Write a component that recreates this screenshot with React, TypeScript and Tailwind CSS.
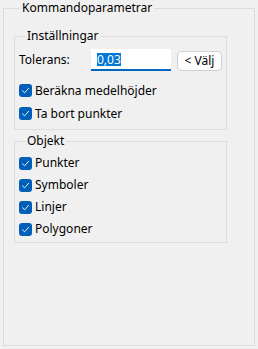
import React from "react";

function Check({ label }: { label: string }) {
  return (
    <div className="flex items-center h-[22px]">
      <span className="w-[13px] h-[13px] rounded-[3px] bg-[#005fb8] flex items-center justify-center shrink-0">
        <svg width="9" height="9" viewBox="0 0 9 9" fill="none">
          <path d="M1.5 4.8 L3.6 6.8 L7.6 2.3" stroke="#ffffff" strokeWidth="0.9" strokeLinecap="round" strokeLinejoin="round" />
        </svg>
      </span>
      <span className="ml-[3px]">{label}</span>
    </div>
  );
}

export default function App() {
  return (
    <div
      className="w-[258px] h-[349px] bg-[#f0f0f0] px-[3px] pb-[3px] text-[12px] leading-[16px] text-black"
      style={{ fontFamily: '"Segoe UI", "Noto Sans", sans-serif' }}
    >
      <fieldset className="h-full border border-[#dcdcdc] pl-[10px] pt-[12px]">
        <legend className="ml-[6px] px-[2px]">Kommandoparametrar</legend>

        <fieldset className="w-[213px] border border-[#dcdcdc] pl-[4px] pt-[5px] pb-[4px]">
          <legend className="ml-[6px] px-[2px]">Inställningar</legend>
          <div className="flex items-center h-[22px]">
            <span className="w-[72px]">Tolerans:</span>
            <div className="w-[80px] h-[22px] bg-white border-b-2 border-[#0067c0] flex items-center pl-[6px]">
              <span className="bg-[#0078d7] text-white leading-[13px]">0,03</span>
            </div>
            <button className="ml-[6px] w-[45px] h-[20px] mt-[1px] rounded-[4px] border border-[#d0d0d0] bg-[#fdfdfd] flex items-center justify-center leading-[14px]">
              &lt; Välj
            </button>
          </div>
          <div className="mt-[8px] flex flex-col">
            <div className="h-[23px] flex items-center"><Check label="Beräkna medelhöjder" /></div>
            <div className="h-[23px] flex items-center"><Check label="Ta bort punkter" /></div>
          </div>
        </fieldset>

        <fieldset className="w-[213px] mt-[3px] border border-[#dcdcdc] pl-[4px] pt-[3px] pb-[2px]">
          <legend className="ml-[6px] px-[2px]">Objekt</legend>
          <Check label="Punkter" />
          <Check label="Symboler" />
          <Check label="Linjer" />
          <Check label="Polygoner" />
        </fieldset>
      </fieldset>
    </div>
  );
}
